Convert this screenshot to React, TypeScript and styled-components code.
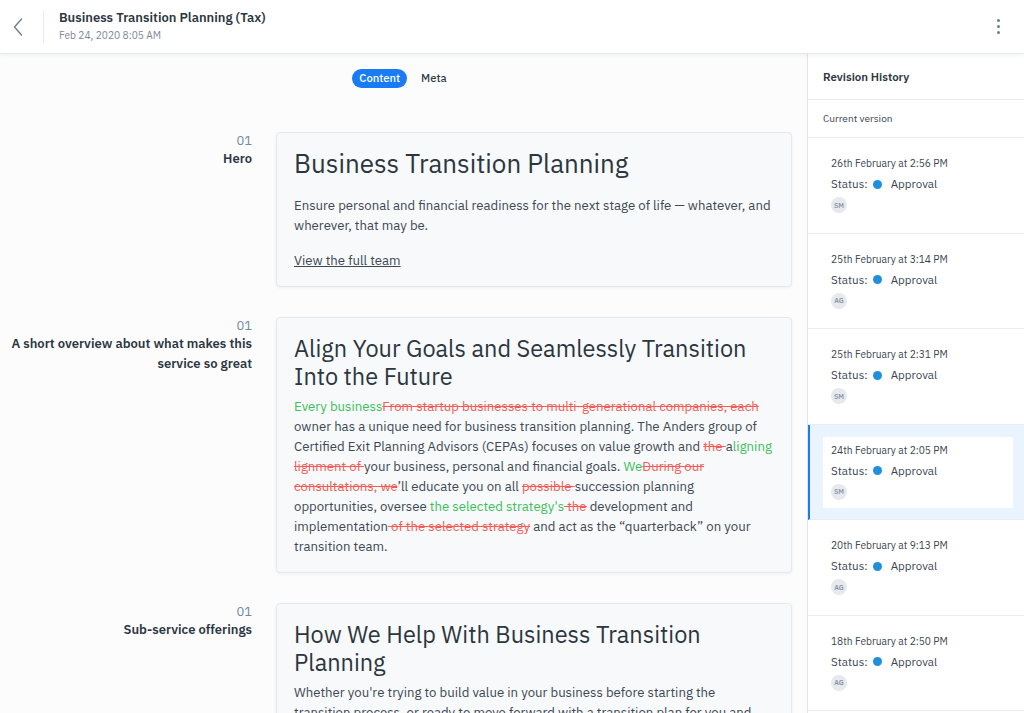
import React from 'react';
import styled, { createGlobalStyle } from 'styled-components';

const GlobalStyle = createGlobalStyle`
  html, body {
    margin: 0;
    padding: 0;
    height: 100%;
    overflow: hidden;
  }
  body {
    font-family: 'IBM Plex Sans', Roboto, 'Noto Sans', sans-serif;
    color: #2d3742;
    background: #fcfcfd;
  }
  * {
    box-sizing: border-box;
  }
`;

type Revision = {
  date: string;
  initials: string;
  selected?: boolean;
};

const revisions: Revision[] = [
  { date: '26th February at 2:56 PM', initials: 'SM' },
  { date: '25th February at 3:14 PM', initials: 'AG' },
  { date: '25th February at 2:31 PM', initials: 'SM' },
  { date: '24th February at 2:05 PM', initials: 'SM', selected: true },
  { date: '20th February at 9:13 PM', initials: 'AG' },
  { date: '18th February at 2:50 PM', initials: 'AG' },
];

function App() {
  return (
    <Page>
      <GlobalStyle />
      <Header>
        <BackButton>
          <svg width='10' height='18' viewBox='0 0 10 18' fill='none'>
            <path d='M8.5 1L1.5 9l7 8' stroke='#6d7f92' strokeWidth='1.4' strokeLinecap='round' strokeLinejoin='round' />
          </svg>
        </BackButton>
        <HeaderDivider />
        <TitleBlock>
          <PageTitle>Business Transition Planning (Tax)</PageTitle>
          <PageDate>Feb 24, 2020 8:05 AM</PageDate>
        </TitleBlock>
        <Kebab>
          <span />
          <span />
          <span />
        </Kebab>
      </Header>
      <Body>
        <ContentArea>
          <Tabs>
            <Tab active>Content</Tab>
            <Tab>Meta</Tab>
          </Tabs>
          <Sections>
            <Section>
              <SectionLabel>
                <SectionNumber>01</SectionNumber>
                <SectionName>Hero</SectionName>
              </SectionLabel>
              <Card>
                <CardHeading size={26} gap={18}>
                  Business Transition Planning
                </CardHeading>
                <CardText>
                  Ensure personal and financial readiness for the next stage of life — whatever, and wherever, that may
                  be.
                </CardText>
                <CardLink>View the full team</CardLink>
              </Card>
            </Section>
            <Section>
              <SectionLabel>
                <SectionNumber>01</SectionNumber>
                <SectionName>A short overview about what makes this service so great</SectionName>
              </SectionLabel>
              <Card>
                <CardHeading size={23.5} gap={6}>
                  Align Your Goals and Seamlessly Transition Into the Future
                </CardHeading>
                <CardText>
                  <Added>Every business</Added>
                  <Removed>From startup businesses to multi-generational companies, each</Removed> owner has a unique
                  need for business transition planning. The Anders group of Certified Exit Planning Advisors (CEPAs)
                  focuses on value growth and <Removed>the </Removed>a<Added>ligning</Added>{' '}
                  <Removed>lignment of </Removed>your business, personal and financial goals. <Added>We</Added>
                  <Removed>During our consultations, we</Removed>’ll educate you on all <Removed>possible </Removed>
                  succession planning opportunities, oversee <Added>the selected strategy's</Added>
                  <Removed> the</Removed> development and implementation<Removed> of the selected strategy</Removed>{' '}
                  and act as the “quarterback” on your transition team.
                </CardText>
              </Card>
            </Section>
            <Section>
              <SectionLabel>
                <SectionNumber>01</SectionNumber>
                <SectionName>Sub-service offerings</SectionName>
              </SectionLabel>
              <Card>
                <CardHeading size={23.5} gap={6}>
                  How We Help With Business Transition Planning
                </CardHeading>
                <CardText>
                  Whether you're trying to build value in your business before starting the transition process, or
                  ready to move forward with a transition plan for you and your family, our team is here to help.
                </CardText>
              </Card>
            </Section>
          </Sections>
        </ContentArea>
        <Sidebar>
          <SidebarTitle>Revision History</SidebarTitle>
          <CurrentVersion>Current version</CurrentVersion>
          {revisions.map((rev) => (
            <RevisionItem key={rev.date} selected={rev.selected}>
              <RevisionInner>
                <RevisionDate>{rev.date}</RevisionDate>
                <StatusRow>
                  Status:
                  <StatusDot />
                  Approval
                </StatusRow>
                <Avatar>{rev.initials}</Avatar>
              </RevisionInner>
            </RevisionItem>
          ))}
        </Sidebar>
      </Body>
    </Page>
  );
}

export default App;

const Page = styled.div`
  height: 100vh;
  display: flex;
  flex-direction: column;
  overflow: hidden;
`;

const Header = styled.header`
  height: 54px;
  flex-shrink: 0;
  display: flex;
  align-items: center;
  background: #fff;
  border-bottom: 1px solid #e4e7eb;
  box-shadow: 0 1px 5px rgba(40, 50, 60, 0.07);
  position: relative;
  z-index: 2;
`;

const BackButton = styled.div`
  width: 43px;
  height: 100%;
  display: flex;
  align-items: center;
  justify-content: center;
  padding-right: 8px;
`;

const HeaderDivider = styled.div`
  width: 1px;
  height: 33px;
  background: #e8ebee;
`;

const TitleBlock = styled.div`
  flex: 1;
  padding-left: 15px;
  display: flex;
  flex-direction: column;
  gap: 3px;
  margin-top: -2px;
`;

const PageTitle = styled.div`
  font-size: 13px;
  font-weight: 600;
  line-height: 17px;
  color: #2d3742;
`;

const PageDate = styled.div`
  font-size: 10.2px;
  line-height: 13px;
  color: #7d8894;
`;

const Kebab = styled.div`
  width: 50px;
  display: flex;
  flex-direction: column;
  align-items: center;
  gap: 3px;
  padding-right: 2px;
  & span {
    width: 3px;
    height: 3px;
    border-radius: 50%;
    background: #6b7c8f;
  }
`;

const Body = styled.div`
  flex: 1;
  display: flex;
  min-height: 0;
`;

const ContentArea = styled.main`
  flex: 1;
  background: #fcfcfd;
  overflow: hidden;
  padding: 15px 15px 0 0;
`;

const Tabs = styled.div`
  display: flex;
  justify-content: center;
  align-items: center;
  gap: 7px;
  padding-left: 14px;
`;

const Tab = styled.div<{ active?: boolean }>`
  height: 19px;
  line-height: 19px;
  padding: 0 7px;
  border-radius: 10px;
  font-size: 11.2px;
  font-weight: 500;
  color: ${(p) => (p.active ? '#fff' : '#333d47')};
  background: ${(p) => (p.active ? '#1a7cf5' : 'transparent')};
`;

const Sections = styled.div`
  margin-top: 44px;
  display: flex;
  flex-direction: column;
  gap: 30px;
`;

const Section = styled.section`
  display: grid;
  grid-template-columns: 252px 1fr;
  column-gap: 24px;
  align-items: start;
`;

const SectionLabel = styled.div`
  text-align: right;
  padding-top: 0;
`;

const SectionNumber = styled.div`
  font-size: 13px;
  line-height: 17px;
  color: #6f8aa5;
`;

const SectionName = styled.div`
  font-size: 13px;
  font-weight: 600;
  line-height: 20px;
  color: #2d3742;
`;

const Card = styled.div`
  background: #f8f9fb;
  border: 1px solid #e5e8ec;
  border-radius: 4px;
  box-shadow: 0 1px 3px rgba(40, 50, 60, 0.06);
  padding: 16px 18px 16px 17px;
`;

const CardHeading = styled.h2<{ size: number; gap: number }>`
  margin: 0 0 ${(p) => p.gap}px;
  font-size: ${(p) => p.size}px;
  font-weight: 400;
  line-height: 28px;
  color: #2b3640;
`;

const CardText = styled.p`
  margin: 0;
  font-size: 13.2px;
  line-height: 20px;
  color: #3d4852;
`;

const CardLink = styled.a`
  display: inline-block;
  margin-top: 15px;
  font-size: 13.2px;
  line-height: 20px;
  color: #3d4852;
  text-decoration: underline;
`;

const Added = styled.span`
  color: #3dbf5b;
`;

const Removed = styled.span`
  color: #f25c54;
  text-decoration: line-through;
`;

const Sidebar = styled.aside`
  width: 217px;
  flex-shrink: 0;
  background: #fff;
  border-left: 1px solid #e1e5ea;
  overflow: hidden;
`;

const SidebarTitle = styled.div`
  height: 46px;
  display: flex;
  align-items: center;
  padding-left: 15px;
  font-size: 11.5px;
  font-weight: 600;
  color: #2d3742;
  border-bottom: 1px solid #e8ebef;
`;

const CurrentVersion = styled.div`
  height: 38px;
  display: flex;
  align-items: center;
  padding-left: 15px;
  font-size: 10.1px;
  color: #3a4550;
  border-bottom: 1px solid #e8ebef;
`;

const RevisionItem = styled.div<{ selected?: boolean }>`
  height: 95.5px;
  padding: 12px 11px 12px ${(p) => (p.selected ? 13 : 15)}px;
  border-bottom: 1px solid #e8ebef;
  background: ${(p) => (p.selected ? '#eaf4fe' : '#fff')};
  border-left: ${(p) => (p.selected ? '2px solid #1a7cf5' : 'none')};
`;

const RevisionInner = styled.div`
  background: #fff;
  height: 71px;
  padding: 7px 8px 8px;
  display: flex;
  flex-direction: column;
  align-items: flex-start;
`;

const RevisionDate = styled.div`
  font-size: 10.2px;
  line-height: 14px;
  color: #3a4550;
`;

const StatusRow = styled.div`
  margin-top: 4px;
  display: flex;
  align-items: center;
  font-size: 11.6px;
  line-height: 18px;
  color: #3a4550;
`;

const StatusDot = styled.span`
  width: 9px;
  height: 9px;
  border-radius: 50%;
  background: #1e8fdb;
  margin: 0 9px 0 5px;
`;

const Avatar = styled.div`
  margin-top: 4px;
  width: 16px;
  height: 16px;
  border-radius: 50%;
  background: #e6e9ed;
  color: #8a96a3;
  font-size: 7px;
  font-weight: 600;
  display: flex;
  align-items: center;
  justify-content: center;
`;
